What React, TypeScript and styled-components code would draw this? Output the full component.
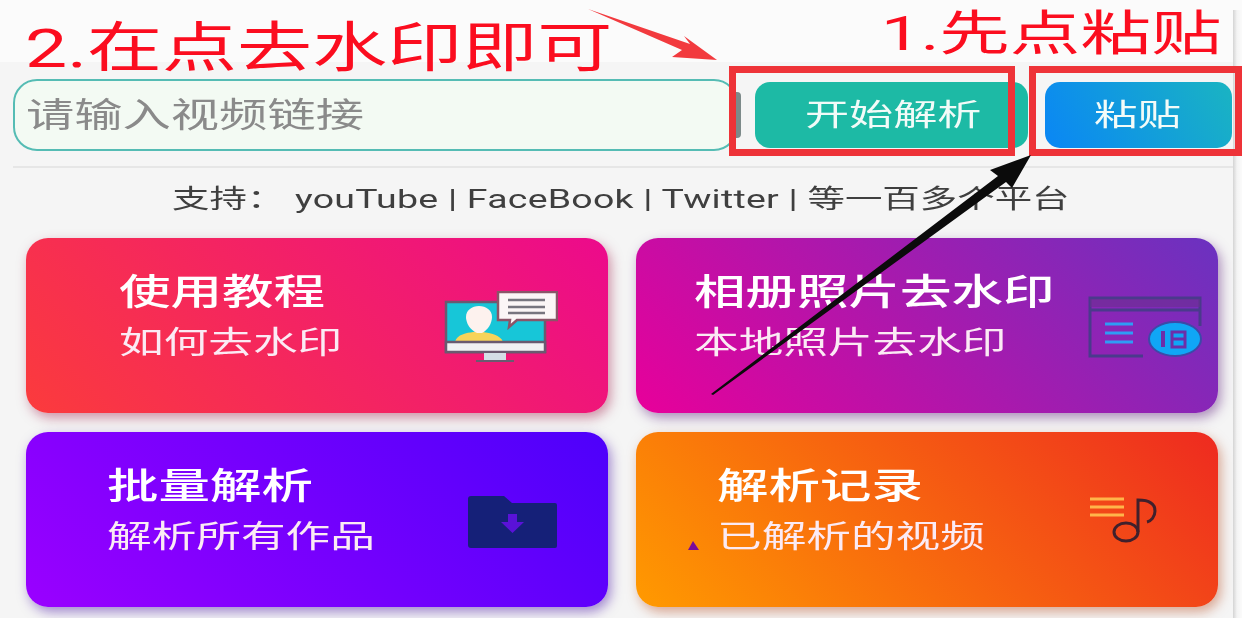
import React from "react";
import styled, { createGlobalStyle } from "styled-components";

const Global = createGlobalStyle`
  html, body { margin: 0; padding: 0; background: #f5f5f5; }
  body { font-family: Roboto, "Noto Sans CJK SC", sans-serif; }
`;
const Page = styled.div`
  position: relative; width: 1242px; height: 618px; overflow: hidden;
  background: #f5f5f5; display: flex; flex-direction: column; filter: blur(0.6px);
`;
const TopBand = styled.div`height: 62px; background: #fbfbfb; flex: none;`;
const SearchRow = styled.div`
  display: flex; align-items: center; height: 72px; margin-top: 17px; padding-left: 13px; flex: none;
`;
const InputBox = styled.div`
  width: 725px; height: 72px; box-sizing: border-box; flex: none; border: 2px solid #55bcb4; border-radius: 24px;
  background: #f3faf3; display: flex; align-items: center; padding-left: 11px; overflow: hidden;
`;
const Stretch = styled.span<{ $x: number }>`
  display: block; white-space: pre; transform: scaleX(${(p) => p.$x}); transform-origin: left center;
`;
const Placeholder = styled(Stretch)`font-size: 34px; line-height: 40px; color: #8a8a8a;`;
const ActionButton = styled.div<{ $w: number; $ml: number; $bg: string; $tx: number }>`
  width: ${(p) => p.$w}px; margin-left: ${(p) => p.$ml}px; height: 66px; flex: none; border-radius: 15px;
  background: ${(p) => p.$bg}; display: flex; align-items: center; padding-left: ${(p) => p.$tx}px; box-sizing: border-box;
`;
const ButtonLabel = styled(Stretch)`font-size: 30px; line-height: 36px; color: #f2fbf8;`;
const Divider = styled.div`height: 2px; background: #e6e6e6; margin: 15px 0 0 13px; flex: none;`;
const Support = styled.div`
  height: 70px; padding: 0 0 8px 172px; box-sizing: border-box; display: flex; align-items: center; flex: none;
`;
const SupportText = styled(Stretch)`font-size: 26px; line-height: 32px; color: #3f3f3f;`;
const PlatformNames = styled.span`margin-left: -5.5px; letter-spacing: 0.18px;`;
const CardGrid = styled.div`
  display: grid; grid-template-columns: 582px 582px; grid-template-rows: 175px 175px; gap: 19px 28px; padding-left: 26px;
`;
const Card = styled.div<{ $bg: string; $pad: number; $shadow: string }>`
  position: relative; border-radius: 22px; background: ${(p) => p.$bg}; padding: 33px 0 0 ${(p) => p.$pad}px;
  box-shadow: 3px 5px 12px ${(p) => p.$shadow}; box-sizing: border-box; color: #fff;
`;
const CardTitle = styled(Stretch)`font-size: 36px; line-height: 44px; font-weight: 500;`;
const CardSub = styled(Stretch)`font-size: 31px; line-height: 40px; margin-top: 8px; color: #fbeaf4;`;
const IconSlot = styled.div<{ $r: number; $t: number }>`
  position: absolute; right: ${(p) => p.$r}px; top: ${(p) => p.$t}px; line-height: 0;
`;
const Note = styled(Stretch)<{ $l: number; $t: number; $s: number }>`
  position: absolute; left: ${(p) => p.$l}px; top: ${(p) => p.$t}px; font-size: ${(p) => p.$s}px;
  line-height: 1; color: #fb0d1f; font-weight: 400;
`;
const RedFrame = styled.div<{ $l: number; $t: number; $w: number; $h: number }>`
  position: absolute; left: ${(p) => p.$l}px; top: ${(p) => p.$t}px; width: ${(p) => p.$w}px; height: ${(p) => p.$h}px;
  box-sizing: border-box; border: 7px solid #ee3338;
`;
const Overlay = styled.svg`position: absolute; left: 0; top: 0; pointer-events: none;`;
const RightEdge = styled.div`position: absolute; left: 1233px; top: 10px; bottom: 0; width: 9px; background: linear-gradient(90deg,#d4d4d4,#f4f4f4 45%,#fbfbfb);`;
const InputCap = styled.div`position: absolute; left: 736px; top: 92px; width: 5px; height: 46px; background: #7d8a8a; border-radius: 0 4px 4px 0;`;

const TeachIcon = () => (
  <svg width="114" height="72" viewBox="0 0 114 72">
    <rect x="2" y="11" width="99" height="50" fill="#17c6d8" stroke="#6a5a70" strokeWidth="2.500" />
    <path d="M11 51c2-8 12-9 18-10h10c7 1 18 3 20 10z" fill="#f7d35a" />
    <path d="M33 42c-7-3-11-10-11-16 0-7 6-11 13-11s13 4 13 11c0 6-4 13-10 16z" fill="#fdf2ee" />
    <rect x="2" y="51" width="99" height="10" fill="#f1f1f3" stroke="#6a5a70" strokeWidth="2.500" />
    <rect x="40" y="62" width="22" height="7" fill="#d5dde6" />
    <path d="M32 70h38" stroke="#6a5a70" strokeWidth="2" />
    <path d="M54 1h59v28H73l-8 7 1-7H54z" fill="#fbf6f6" stroke="#8a5568" strokeWidth="2.500" />
    <path d="M64 9h37M64 16h37M64 22h37" stroke="#77757e" strokeWidth="2.500" />
  </svg>
);
const AlbumIcon = () => (
  <svg width="114" height="62" viewBox="0 0 114 62">
    <path d="M55 60H2V2h110v28" fill="none" stroke="#4a3a8c" strokeWidth="3" />
    <path d="M2 14h110" stroke="#4a3a8c" strokeWidth="3" />
    <path d="M2 7h110" stroke="#6b2f90" strokeWidth="8" opacity=".6" />
    <path d="M17 28h28M17 37h28M17 46h28" stroke="#2f9cf5" strokeWidth="3" />
    <ellipse cx="87" cy="43" rx="26" ry="17" fill="#10a6f6" stroke="#3c4aa8" strokeWidth="2" />
    <path d="M75 35v16" stroke="#6d2ea8" strokeWidth="4" />
    <rect x="84" y="36" width="13" height="15" fill="none" stroke="#6d2ea8" strokeWidth="3" />
    <path d="M84 43h13" stroke="#6d2ea8" strokeWidth="3" />
  </svg>
);
const FolderIcon = () => (
  <svg width="91" height="54" viewBox="0 0 91 54">
    <path d="M1 4a3 3 0 0 1 3-3h33l8 7h43a2 2 0 0 1 2 2v41a2 2 0 0 1-2 2H4a3 3 0 0 1-3-3z" fill="#152078" />
    <path d="M41 19h9v8h7L45.500 38 34 27h7z" fill="#5a12d8" />
  </svg>
);
const MusicIcon = () => (
  <svg width="68" height="46" viewBox="0 0 68 46">
    <path d="M0 2h34M0 10h34M0 18h34" stroke="#ffb54a" strokeWidth="3" />
    <ellipse cx="36" cy="35" rx="12" ry="9" fill="none" stroke="#40202c" strokeWidth="3" />
    <path d="M48 35V3c8 0 17 2 17 11 0 6-4 10-8 11" fill="none" stroke="#40202c" strokeWidth="3" />
  </svg>
);

export default function App() {
  return (
    <Page>
      <Global />
      <TopBand />
      <SearchRow>
        <InputBox><Placeholder $x={1.42}>请输入视频链接</Placeholder></InputBox>
        <ActionButton $w={273} $ml={17} $bg="#1dbaa5" $tx={50}><ButtonLabel $x={1.47}>开始解析</ButtonLabel></ActionButton>
        <ActionButton $w={187} $ml={17} $bg="linear-gradient(60deg,#0a86f5,#1ab4c2)" $tx={49}><ButtonLabel $x={1.45}>粘贴</ButtonLabel></ActionButton>
      </SearchRow>
      <Divider />
      <Support>
        <SupportText $x={1.44}>支持：  <PlatformNames>youTube | FaceBook | Twitter | </PlatformNames>等一百多个平台</SupportText>
      </Support>
      <CardGrid>
        <Card $pad={93} $bg="linear-gradient(45deg,#fb3b3c,#ec0a8c)" $shadow="rgba(170,50,90,.5)">
          <CardTitle $x={1.43}>使用教程</CardTitle>
          <CardSub $x={1.44}>如何去水印</CardSub>
          <IconSlot $r={50} $t={53}><TeachIcon /></IconSlot>
        </Card>
        <Card $pad={58} $bg="linear-gradient(45deg,#e8009a,#6a32c0)" $shadow="rgba(100,40,130,.5)">
          <CardTitle $x={1.43}>相册照片去水印</CardTitle>
          <CardSub $x={1.44}>本地照片去水印</CardSub>
          <IconSlot $r={16} $t={58}><AlbumIcon /></IconSlot>
        </Card>
        <Card $pad={81} $bg="linear-gradient(45deg,#9a00ff,#4d00fb)" $shadow="rgba(80,30,170,.5)">
          <CardTitle $x={1.43}>批量解析</CardTitle>
          <CardSub $x={1.44}>解析所有作品</CardSub>
          <IconSlot $r={50} $t={63}><FolderIcon /></IconSlot>
        </Card>
        <Card $pad={81} $bg="linear-gradient(45deg,#ff9a00,#ee2a20)" $shadow="rgba(190,90,50,.5)">
          <CardTitle $x={1.43}>解析记录</CardTitle>
          <CardSub $x={1.44}>已解析的视频</CardSub>
          <IconSlot $r={60} $t={65}><MusicIcon /></IconSlot>
        </Card>
      </CardGrid>
      <RightEdge />
      <InputCap />
      <RedFrame $l={729} $t={66} $w={286} $h={90} />
      <RedFrame $l={1029} $t={66} $w={213} $h={90} />
      <Note $x={1.39} $l={25} $t={22} $s={54}>2.在点去水印即可</Note>
      <Note $x={1.47} $l={881} $t={10} $s={48}>1.先点粘贴</Note>
      <Overlay width="1242" height="618" viewBox="0 0 1242 618">
        <path d="M588 9 L690 44 L684 36 L717 60 L672 57 L682 50 Z" fill="#f23a3e" />
        <path d="M711 394 L998 176 L990 170 L1031 155 L1012 188 L1006 182 L713 395 Z" fill="#0b0b0b" />
        <path d="M693 541 L699 550 L688 550 Z" fill="#7a0a9a" />
      </Overlay>
    </Page>
  );
}
